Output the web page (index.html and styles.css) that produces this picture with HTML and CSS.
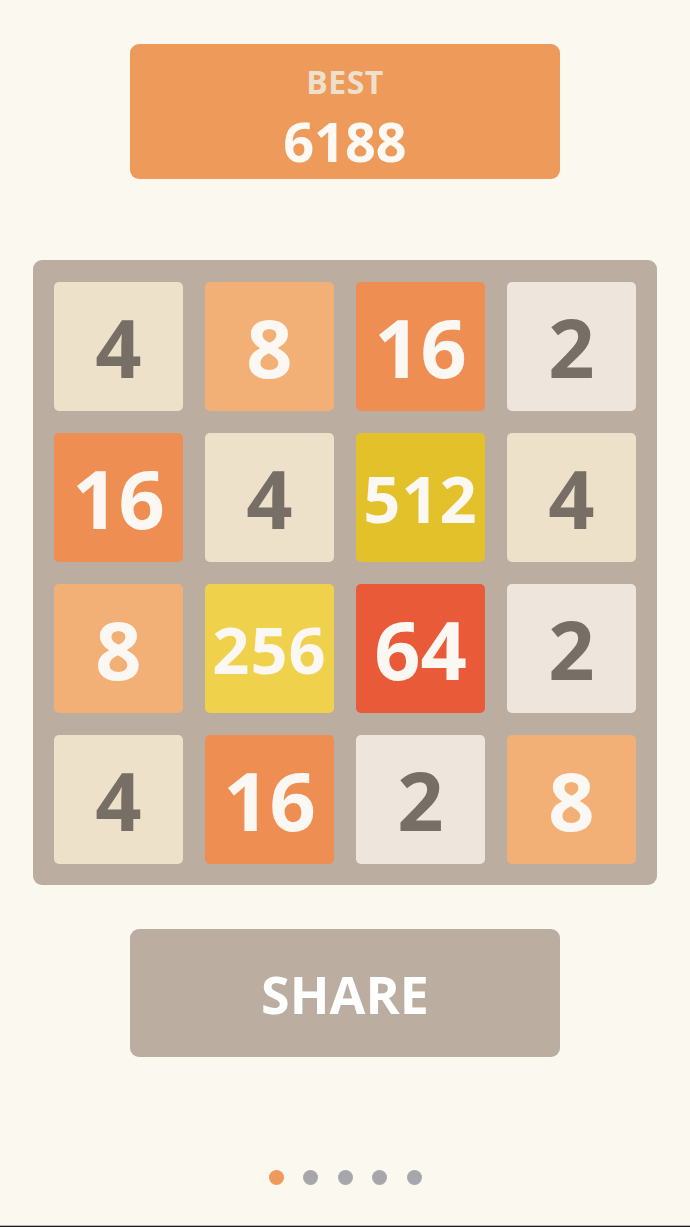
FILE: index.html
```html
<!DOCTYPE html>
<html lang="en">
<head>
<meta charset="utf-8">
<title>2048</title>
<link rel="stylesheet" href="styles.css">
</head>
<body>
<div class="app">
  <div class="best">
    <div class="best-label">BEST</div>
    <div class="best-value">6188</div>
  </div>

  <div class="board">
    <div class="tile t4">4</div>
    <div class="tile t8">8</div>
    <div class="tile t16">16</div>
    <div class="tile t2">2</div>

    <div class="tile t16">16</div>
    <div class="tile t4">4</div>
    <div class="tile t512 three">512</div>
    <div class="tile t4">4</div>

    <div class="tile t8">8</div>
    <div class="tile t256 three">256</div>
    <div class="tile t64">64</div>
    <div class="tile t2">2</div>

    <div class="tile t4">4</div>
    <div class="tile t16">16</div>
    <div class="tile t2">2</div>
    <div class="tile t8">8</div>
  </div>

  <div class="share">SHARE</div>

  <div class="dots">
    <span class="dot active"></span>
    <span class="dot"></span>
    <span class="dot"></span>
    <span class="dot"></span>
    <span class="dot"></span>
  </div>

  <div class="spacer"></div>
  <div class="edge"></div>
</div>
</body>
</html>
```

FILE: styles.css
```css
html, body {
  margin: 0;
  padding: 0;
}

body {
  background: #fbf8f0;
  font-family: "Open Sans", "DejaVu Sans", sans-serif;
}

.app {
  height: 1227px;
  display: flex;
  flex-direction: column;
  align-items: center;
  overflow: hidden;
}

.best {
  margin-top: 44px;
  width: 430px;
  height: 135px;
  box-sizing: border-box;
  padding-top: 22px;
  border-radius: 9px;
  background: #ee9a5b;
  display: flex;
  flex-direction: column;
  align-items: center;
}

.best-label {
  color: #ede0cc;
  font-size: 32px;
  font-weight: 700;
  line-height: 32px;
  letter-spacing: 0.5px;
}

.best-value {
  color: #fdfaf5;
  font-size: 54px;
  font-weight: 700;
  line-height: 54px;
  margin-top: 16px;
}

.board {
  margin-top: 81px;
  width: 624px;
  height: 625px;
  box-sizing: border-box;
  padding: 22px 21px 21px 21px;
  background: #bbada0;
  border-radius: 9px;
  display: grid;
  grid-template-columns: repeat(4, 129px);
  grid-template-rows: repeat(4, 129px);
  gap: 22px;
}

.tile {
  border-radius: 5px;
  display: flex;
  align-items: center;
  justify-content: center;
  font-size: 81px;
  font-weight: 700;
  color: #fbf8f3;
}

.tile.three {
  font-size: 65px;
  letter-spacing: 1px;
}

.t2 { background: #eee5dc; color: #776e65; }
.t4 { background: #ede1c9; color: #776e65; }
.t8 { background: #f2b077; }
.t16 { background: #ee8e53; }
.t64 { background: #e95a38; }
.t256 { background: #f0d14c; }
.t512 { background: #e3c12b; }

.share {
  margin-top: 44px;
  width: 430px;
  height: 128px;
  border-radius: 9px;
  background: #bbada0;
  color: #ffffff;
  font-size: 52px;
  font-weight: 700;
  display: flex;
  align-items: center;
  justify-content: center;
}

.dots {
  margin-top: 113px;
  display: flex;
  gap: 19.5px;
}

.dot {
  width: 15px;
  height: 15px;
  border-radius: 50%;
  background: #a7a7ab;
}

.dot.active {
  background: #ee9a5b;
}

.spacer {
  flex: 1;
}

.edge {
  align-self: stretch;
  height: 1px;
  border-top: 1px solid #b9b7ae;
  background: #1c1c1c;
}
```
